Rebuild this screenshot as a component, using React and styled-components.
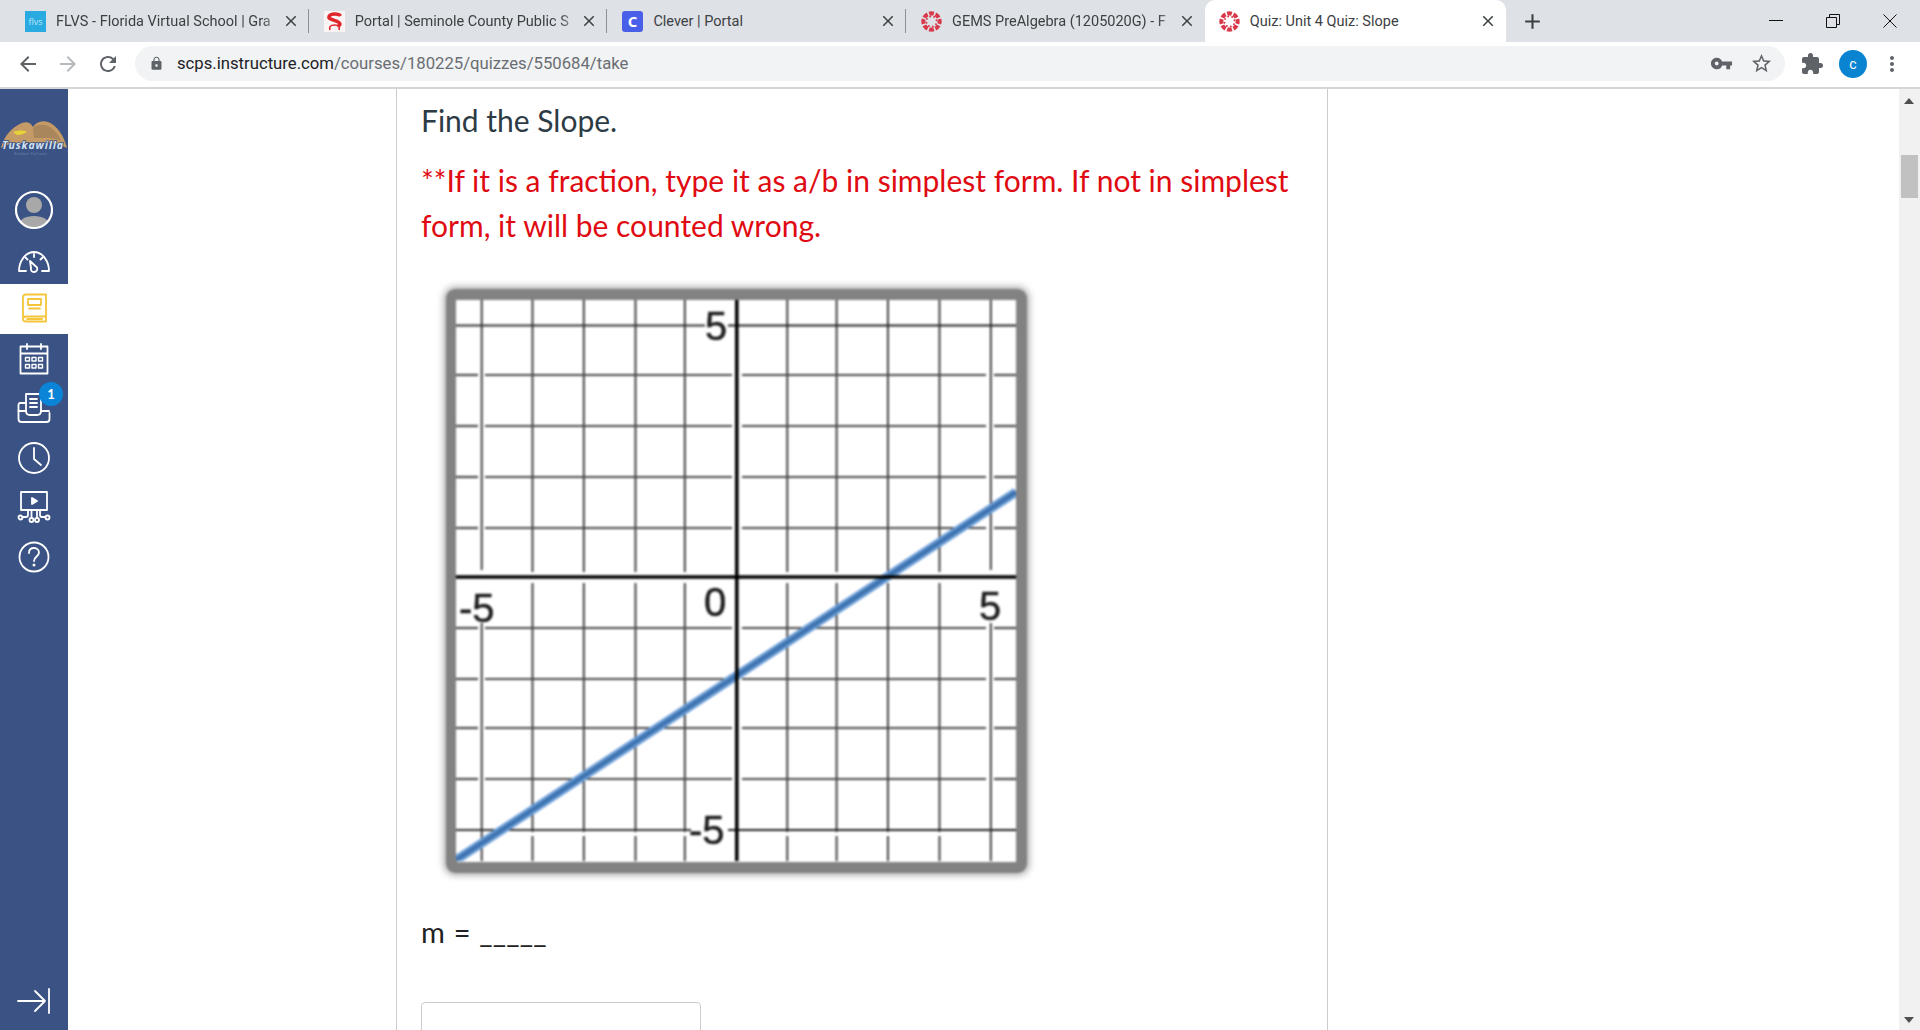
import React from 'react';
import styled, { createGlobalStyle } from 'styled-components';
import {
  MdArrowBack,
  MdArrowForward,
  MdRefresh,
  MdLock,
  MdVpnKey,
  MdStarBorder,
  MdExtension,
  MdMoreVert,
  MdClose,
  MdAdd,
} from 'react-icons/md';

const GlobalStyle = createGlobalStyle`
  html, body { margin: 0; padding: 0; height: 100%; overflow: hidden; background: #fff; }
  #root { height: 100%; }
  * { box-sizing: border-box; }
`;

const Page = styled.div`
  display: flex;
  flex-direction: column;
  height: 100vh;
  font-family: Roboto, 'Noto Sans', sans-serif;
`;

/* browser chrome */
const TabStrip = styled.div`
  display: flex;
  align-items: stretch;
  height: 42px;
  padding-left: 10px;
  background: #dee1e6;
  flex: none;
`;

const Tab = styled.div`
  position: relative;
  display: flex;
  align-items: center;
  width: ${(p) => (p.$active ? '301px' : '298.7px')};
  padding: 0 9px 0 ${(p) => (p.$active ? '14px' : '15px')};
  color: #3c4043;
  background: ${(p) => (p.$active ? '#fff' : 'transparent')};
  border-radius: ${(p) => (p.$active ? '10px 10px 0 0' : '0')};

  &::after {
    content: '';
    position: absolute;
    right: 0;
    top: 9px;
    bottom: 9px;
    width: 1px;
    background: ${(p) => (p.$plain ? 'transparent' : '#8f9296')};
  }
`;

const Favicon = styled.svg`
  width: 21px;
  height: 21px;
  flex: none;
`;

const TabTitle = styled.span`
  flex: 1;
  min-width: 0;
  margin-left: 10px;
  font-size: 14.5px;
  white-space: nowrap;
  ${(p) =>
    p.$fade &&
    'mask-image: linear-gradient(to right, #000 calc(100% - 20px), transparent 100%);'}
`;

const TabClose = styled(MdClose)`
  flex: none;
  font-size: 18px;
  color: #3c4043;
`;

const NewTab = styled(MdAdd)`
  align-self: center;
  margin-left: 14px;
  font-size: 25px;
  color: #3c4043;
`;

const WindowControls = styled.div`
  display: flex;
  align-items: center;
  margin-left: auto;
  padding-right: 23px;
  gap: 43px;
`;

const WindowGlyph = styled.svg`
  width: 14px;
  height: 14px;
  fill: none;
  stroke: #111;
  stroke-width: 1;
`;

const Toolbar = styled.div`
  display: flex;
  align-items: center;
  height: 47px;
  padding: 0 0 2px 16px;
  background: #fff;
  border-bottom: 2px solid #d6d6d6;
  flex: none;
`;

const NavButton = styled.span`
  display: inline-flex;
  width: 24px;
  margin-right: 16px;
  font-size: 24px;
  color: ${(p) => (p.$off ? '#b6b9bd' : '#5f6368')};
`;

const Omnibox = styled.div`
  display: flex;
  align-items: center;
  width: 1650px;
  height: 35px;
  margin-left: -1px;
  padding: 0 12px 0 14px;
  background: #f1f3f4;
  border-radius: 18px;
`;

const LockIcon = styled(MdLock)`
  font-size: 15px;
  color: #5f6368;
`;

const Url = styled.div`
  margin-left: 13px;
  font-size: 16.7px;
  color: #6a6e73;
  b {
    font-weight: 400;
    color: #202124;
  }
`;

const OmniIcons = styled.div`
  display: flex;
  align-items: center;
  margin-left: auto;
  gap: 17px;
  font-size: 23px;
  color: #5f6368;
`;

const ToolIcons = styled.div`
  display: flex;
  align-items: center;
  margin-left: 15px;
  color: #5f6368;
`;

const PuzzleIcon = styled(MdExtension)`
  font-size: 24px;
`;

const Avatar = styled.div`
  display: flex;
  align-items: center;
  justify-content: center;
  width: 28px;
  height: 28px;
  margin-left: 15px;
  border-radius: 50%;
  background: #0a84d0;
  color: #fff;
  font-size: 14px;
`;

const MoreIcon = styled(MdMoreVert)`
  margin-left: 13px;
  font-size: 24px;
`;

/* canvas page */
const Body = styled.div`
  display: flex;
  flex: 1;
  min-height: 0;
`;

const Sidebar = styled.nav`
  display: flex;
  flex-direction: column;
  align-items: stretch;
  width: 68px;
  flex: none;
  background: #3a5284;
  color: #fff;
`;

const LogoBox = styled.div`
  display: flex;
  align-items: flex-start;
  height: 96px;
  padding-top: 29px;
`;

const LogoText = styled.text`
  font-family: 'Open Sans', sans-serif;
  font-size: 10.5px;
  font-style: italic;
  font-weight: 700;
  letter-spacing: 0.9px;
  fill: #d5e2f2;
  paint-order: stroke;
  stroke: #3a5284;
  stroke-width: 1.5px;
`;

const LogoSub = styled.text`
  font-family: 'Open Sans', sans-serif;
  font-size: 3.5px;
  letter-spacing: 0.6px;
  fill: #7f95b8;
`;

const NavItem = styled.div`
  position: relative;
  display: flex;
  align-items: center;
  justify-content: center;
  height: 49.6px;
  background: ${(p) => (p.$active ? '#fff' : 'transparent')};
  color: ${(p) => (p.$active ? '#f5c53a' : '#fff')};
`;

const NavIcon = styled.svg`
  width: 34px;
  height: 34px;
  fill: none;
  stroke: currentColor;
  stroke-width: 1.8;
  stroke-linecap: round;
  stroke-linejoin: round;
`;

const Badge = styled.span`
  position: absolute;
  top: -1px;
  left: 39px;
  display: flex;
  align-items: center;
  justify-content: center;
  width: 24px;
  height: 24px;
  border-radius: 50%;
  background: #0a84d6;
  color: #fff;
  font-family: 'Lato', sans-serif;
  font-size: 13px;
  font-weight: 700;
`;

const CollapseItem = styled(NavItem)`
  margin-top: auto;
  margin-bottom: 4px;
`;

const Main = styled.main`
  flex: 1;
  min-width: 0;
  overflow: hidden;
  background: #fff;
`;

const Column = styled.div`
  width: 932px;
  height: 100%;
  margin-left: 328px;
  padding: 10px 24px 0;
  overflow: hidden;
  border-left: 1px solid #c7cdd1;
  border-right: 1px solid #c7cdd1;
  font-family: 'Lato', sans-serif;
`;

const Heading = styled.div`
  height: 44px;
  font-size: 30px;
  line-height: 42px;
  color: #2d3b45;
`;

const Warning = styled.p`
  margin: 15px 0 0;
  width: 882px;
  font-size: 30px;
  line-height: 45px;
  color: #e00b12;
`;

const GraphFrame = styled.div`
  width: 581px;
  height: 584px;
  margin: 41px 0 0 25px;
  padding: 10.5px 11px 12px 10px;
  background: #fff;
  border-radius: 9px;
  box-shadow: inset 0 0 0 11px #828282, 0 0 7px 2px #a8a8a8;
  filter: blur(0.8px);
`;

const GraphSvg = styled.svg`
  display: block;
  width: 560px;
  height: 561px;
  background: #fff;
`;

const GraphLabel = styled.text`
  font-family: 'Liberation Sans', Arial, sans-serif;
  font-size: 40px;
  fill: #1c1c1c;
  stroke: #1c1c1c;
  stroke-width: 0.5;
`;

const Equation = styled.div`
  height: 40px;
  margin-top: 39px;
  font-size: 29px;
  line-height: 40px;
  letter-spacing: 0.2px;
  word-spacing: 1px;
  color: #222;
`;

const AnswerInput = styled.div`
  width: 280px;
  height: 60px;
  margin-top: 50px;
  background: #fff;
  border: 1px solid #c7cdd1;
  border-radius: 4px;
`;

const Scrollbar = styled.div`
  position: relative;
  width: 21px;
  flex: none;
  background: #f1f1f1;
`;

const ScrollThumb = styled.div`
  width: 17px;
  height: 43px;
  margin: 66px 0 0 2px;
  background: #c1c1c1;
`;

const ScrollArrow = styled.svg`
  position: absolute;
  left: 5px;
  width: 10px;
  height: 6px;
  fill: #505050;
  ${(p) => (p.$down ? 'bottom: 7px;' : 'top: 9px;')}
`;

const gridX = [25.7, 76.5, 127.8, 179.5, 228.8, 331.3, 380.6, 431.9, 483.5, 534.8];
const gridY = [75, 126, 177, 228, 328, 379, 428, 479];

const Seg = ({ a, b, c, color = '#2e2e2e', w = 1.8, vertical }) =>
  vertical ? (
    <line x1={c} x2={c} y1={a} y2={b} stroke={color} strokeWidth={w} />
  ) : (
    <line x1={a} x2={b} y1={c} y2={c} stroke={color} strokeWidth={w} />
  );

function Graph() {
  return (
    <GraphSvg viewBox="0 0 560 561">
      {gridX.map((x) => {
        const edge = x === 25.7 || x === 534.8;
        const spans = edge
          ? [[0, 270], [323, 561]]
          : [[0, 272], [283, 532], [536, 561]];
        return spans.map(([a, b]) => (
          <Seg key={`${x}-${a}`} vertical c={x} a={a} b={b} />
        ));
      })}
      {gridY.map((y) =>
        [[0, 22], [29, 276], [286, 530], [538, 560]].map(([a, b]) => (
          <Seg key={`${y}-${a}`} c={y} a={a} b={b} color="#4a4a4a" w={2.2} />
        )),
      )}
      <Seg c={25.5} a={0} b={249} color="#333" />
      <Seg c={25.5} a={272} b={560} color="#222" w={2.2} />
      <Seg c={530} a={0} b={235} color="#333" />
      <Seg c={530} a={272} b={560} color="#222" w={2.2} />
      <line x1="0" y1="560" x2="560" y2="192" stroke="#6b9dd6" strokeWidth="9" />
      <line x1="0" y1="560" x2="560" y2="192" stroke="#3d72ae" strokeWidth="4" />
      <Seg c={277} a={0} b={560} color="#000" w={3.6} />
      <Seg vertical c={280.8} a={0} b={561} color="#000" w={3.6} />
      <GraphLabel x="249" y="40">5</GraphLabel>
      <GraphLabel x="3" y="322">-5</GraphLabel>
      <GraphLabel x="248" y="316">0</GraphLabel>
      <GraphLabel x="523" y="320">5</GraphLabel>
      <GraphLabel x="233" y="544">-5</GraphLabel>
    </GraphSvg>
  );
}

const canvasDots = [0, 45, 90, 135, 180, 225, 270, 315];

const CanvasIcon = () => (
  <Favicon viewBox="0 0 24 24">
    {canvasDots.map((deg) => (
      <g key={deg} transform={`rotate(${deg} 12 12)`}>
        <path d="M8.600 0.900 A11.500 11.500 0 0 1 15.400 0.900 L13.900 5.300 A7 7 0 0 0 10.100 5.300 Z" fill="#d8394a" />
        <circle cx="15" cy="6.900" r="1.100" fill="#d8394a" />
      </g>
    ))}
  </Favicon>
);

const tabs = [
  {
    title: 'FLVS - Florida Virtual School | Gra',
    fade: true,
    icon: (
      <Favicon viewBox="0 0 21 21">
        <rect width="21" height="21" fill="#29abe2" />
        <text x="10.5" y="14" fontSize="9" textAnchor="middle" fill="#bfe6f7" fontFamily="Open Sans, sans-serif">flvs</text>
      </Favicon>
    ),
  },
  {
    title: 'Portal | Seminole County Public S',
    fade: true,
    icon: (
      <Favicon viewBox="0 0 21 21">
        <rect width="21" height="21" fill="#fbf4f4" />
        <path d="M16.500 5C15 2.500 6.500 2 5 5.500 3.500 9.500 16 9 16 13c0 1-1 1.500-2.500 1.500" fill="none" stroke="#e0262c" strokeWidth="3.400" />
        <path d="M6 19c-1-3 0-5 4.500-5S16 16 15 19" fill="none" stroke="#e0262c" strokeWidth="1.600" />
      </Favicon>
    ),
  },
  {
    title: 'Clever | Portal',
    icon: (
      <Favicon viewBox="0 0 21 21">
        <rect width="21" height="21" rx="3" fill="#4a5fe8" />
        <text x="10.5" y="16" fontSize="15" fontWeight="700" textAnchor="middle" fill="#fff" fontFamily="Open Sans, sans-serif">C</text>
      </Favicon>
    ),
  },
  { title: 'GEMS PreAlgebra (1205020G) - F', fade: true, icon: <CanvasIcon /> },
  { title: 'Quiz: Unit 4 Quiz: Slope', icon: <CanvasIcon />, active: true },
];

export default function App() {
  return (
    <Page>
      <GlobalStyle />
      <TabStrip>
        {tabs.map((t, i) => (
          <Tab key={t.title} $active={t.active} $plain={t.active || i === 3}>
            {t.icon}
            <TabTitle $fade={t.fade}>{t.title}</TabTitle>
            <TabClose />
          </Tab>
        ))}
        <NewTab />
        <WindowControls>
          <WindowGlyph viewBox="0 0 14 14"><path d="M0 6.500h14" /></WindowGlyph>
          <WindowGlyph viewBox="0 0 14 14"><path d="M.5 3.500h10v10H.500zM3.500 3.500V.5h10v10h-3" /></WindowGlyph>
          <WindowGlyph viewBox="0 0 14 14"><path d="M.5.5l13 13M13.500.5l-13 13" /></WindowGlyph>
        </WindowControls>
      </TabStrip>

      <Toolbar>
        <NavButton><MdArrowBack /></NavButton>
        <NavButton $off><MdArrowForward /></NavButton>
        <NavButton><MdRefresh /></NavButton>
        <Omnibox>
          <LockIcon />
          <Url><b>scps.instructure.com</b>/courses/180225/quizzes/550684/take</Url>
          <OmniIcons>
            <MdVpnKey />
            <MdStarBorder />
          </OmniIcons>
        </Omnibox>
        <ToolIcons>
          <PuzzleIcon />
          <Avatar>c</Avatar>
          <MoreIcon />
        </ToolIcons>
      </Toolbar>

      <Body>
        <Sidebar>
          <LogoBox>
            <svg width="68" height="40" viewBox="0 0 68 40">
              <path d="M1 30C4 18 12 9 22 5c5-2 9 0 11 4 3-5 9-7 15-5 9 3 16 14 19 26-8-4-14-5-20-5H20C13 25 7 26 1 30z" fill="#c49b66" />
              <path d="M33 10c4-4 10-4 15-2 6 3 11 9 13 15-4-2-8-3-13-3H34z" fill="#a07f58" opacity="0.75" />
              <path d="M13 14c5-2 11-2 14 0-3 2-6 3-10 3z" fill="#e8d23a" />
              <LogoText x="2" y="31">Tuskawilla</LogoText>
              <LogoSub x="14" y="36.500">Golden Falcons</LogoSub>
            </svg>
          </LogoBox>
          <NavItem>
            <svg width="40" height="40" viewBox="0 0 40 40">
              <defs>
                <clipPath id="avatarClip"><circle cx="20" cy="20" r="17.500" /></clipPath>
              </defs>
              <g clipPath="url(#avatarClip)" fill="#a8a8a8">
                <circle cx="20" cy="15" r="8" />
                <path d="M3 40c0-10 8-14 17-14s17 4 17 14z" />
              </g>
              <circle cx="20" cy="20" r="18" fill="none" stroke="#fff" strokeWidth="2.200" />
            </svg>
          </NavItem>
          <NavItem>
            <NavIcon viewBox="0 0 34 34">
              <path d="M9 29H2C2 20 8 10 17 10s15 10 15 19h-7" />
              <path d="M17 12v3M8.500 15.500l2 2M25.500 15.500l-2 2" />
              <path d="M13 19l7 6.500c1 2-.5 4.500-3 4.500s-3.500-2-3-4z" />
            </NavIcon>
          </NavItem>
          <NavItem $active>
            <NavIcon viewBox="0 0 34 34">
              <path d="M6 27V5.500C6 3.500 7 2.500 9 2.500h20v22H9c-2 0-3 1-3 2.500s1 2.500 3 2.500h20v-5" />
              <path d="M11 7h13v6H11zM12 16.500h11M10 27h15" />
            </NavIcon>
          </NavItem>
          <NavItem>
            <NavIcon viewBox="0 0 34 34">
              <path d="M3.500 4.500h27v27h-27zM3.500 11.500h27M10 2v5M24 2v5" />
              <path strokeWidth="1.400" d="M8.500 15.500h4v3.500h-4zM15 15.500h4v3.500h-4zM21.500 15.500h4v3.500h-4zM8.500 22.500h4v3.500h-4zM15 22.500h4v3.500h-4zM21.500 22.500h4v3.500h-4z" />
            </NavIcon>
          </NavItem>
          <NavItem>
            <NavIcon viewBox="0 0 34 34">
              <path d="M9 20V3h15v17M13 8h7M13 12h7M13 16h7" />
              <path d="M9 12H3c-1 0-1.500 1-1.500 2v14c0 2 1 3 3 3h25c2 0 3-1 3-3V22" />
              <path d="M1.500 20H9c0 3 2 4 4 4h7c2 0 4-1 4-4h8" />
            </NavIcon>
            <Badge>1</Badge>
          </NavItem>
          <NavItem>
            <NavIcon viewBox="0 0 34 34">
              <circle cx="17" cy="17" r="15" />
              <path d="M17 7v11l7 6" />
            </NavIcon>
          </NavItem>
          <NavItem>
            <NavIcon viewBox="0 0 34 34">
              <path d="M4 2h26v18H4z" />
              <path d="M15 8l5 3-5 3z" fill="currentColor" />
              <path d="M11 20v5c0 1-1 2-2 2H5.500M14.500 20v8M20 20v8M23 20v5c0 1 1 2 2 2h3.500" />
              <circle cx="3.500" cy="27.500" r="2" />
              <circle cx="14.500" cy="30" r="2" />
              <circle cx="20" cy="30" r="2" />
              <circle cx="30.500" cy="27.500" r="2" />
            </NavIcon>
          </NavItem>
          <NavItem>
            <NavIcon viewBox="0 0 34 34">
              <circle cx="17" cy="17" r="14.500" />
              <path d="M12 13c0-3 2-5 5-5s5 2 5 4.500c0 4-5 4-5 8.500" />
              <circle cx="17" cy="25" r="0.6" fill="currentColor" />
            </NavIcon>
          </NavItem>
          <CollapseItem>
            <NavIcon viewBox="0 0 34 34">
              <path d="M1 17h27M18 7l10 10-10 10M32 5v24" />
            </NavIcon>
          </CollapseItem>
        </Sidebar>

        <Main>
          <Column>
            <Heading>Find the Slope.</Heading>
            <Warning>
              **If it is a fraction, type it as a/b in simplest form. If not in simplest form, it will be counted wrong.
            </Warning>
            <GraphFrame>
              <Graph />
            </GraphFrame>
            <Equation>m = _____</Equation>
            <AnswerInput />
          </Column>
        </Main>

        <Scrollbar>
          <ScrollArrow viewBox="0 0 10 6"><path d="M5 0l5 6H0z" /></ScrollArrow>
          <ScrollThumb />
          <ScrollArrow $down viewBox="0 0 10 6"><path d="M0 0h10L5 6z" /></ScrollArrow>
        </Scrollbar>
      </Body>
    </Page>
  );
}
